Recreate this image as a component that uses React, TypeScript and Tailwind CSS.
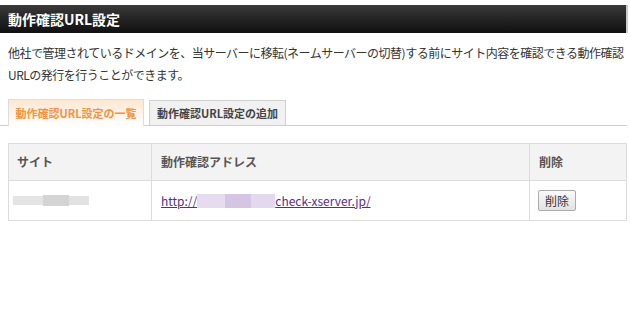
export default function App() {
  return (
    <div className="h-[330px] w-[630px] bg-white pt-[5px] font-['Noto_Sans_CJK_JP',sans-serif] text-[12px] text-[#333]">
      <h1 className="flex h-[28px] w-[628px] items-center border-r-2 border-[#ccc] bg-gradient-to-b from-[#3a3a3a] to-[#101010] pl-[8px] text-[14px] font-bold text-white">
        動作確認URL設定
      </h1>

      <p className="mt-[9px] whitespace-nowrap pl-[8px] leading-[22px] tracking-[-0.5px]">
        他社で管理されているドメインを、当サーバーに移転(ネームサーバーの切替)する前にサイト内容を確認できる動作確認
        <br />
        URLの発行を行うことができます。
      </p>

      <div className="mt-[13px] flex w-[627px] items-end gap-[5px] border-b border-[#cfcfcf] pl-[8px]">
        <div className="-mb-px flex h-[27px] w-[136px] items-center justify-center border border-b-0 border-[#ddd] bg-gradient-to-b from-[#fde7d2] to-white text-[11px] font-bold text-[#f3933f]">
          動作確認URL設定の一覧
        </div>
        <div className="flex h-[25px] w-[137px] items-center justify-center border border-b-0 border-[#d0d0d0] bg-[#f1f1f1] text-[11px] font-bold text-[#444]">
          動作確認URL設定の追加
        </div>
      </div>

      <table className="mt-[17px] ml-[8px] w-[619px] border-collapse">
        <thead>
          <tr className="h-[37px] bg-[#f3f3f3] text-left text-[#555]">
            <th className="w-[143px] border border-[#dcdcdc] pl-[8px] font-bold">サイト</th>
            <th className="w-[378px] border border-[#dcdcdc] pl-[9px] font-bold">動作確認アドレス</th>
            <th className="border border-[#dcdcdc] pl-[9px] font-bold">削除</th>
          </tr>
        </thead>
        <tbody>
          <tr className="h-[40px]">
            <td className="border border-[#dcdcdc] pl-[4px]">
              <div className="flex items-center">
                <span className="h-[9px] w-[30px] bg-[#e4e4e4]" />
                <span className="h-[11px] w-[26px] bg-[#d4d4d4]" />
                <span className="h-[9px] w-[20px] bg-[#e2e2e2]" />
              </div>
            </td>
            <td className="border border-[#dcdcdc] pl-[9px]">
              <div className="flex items-center">
                <span className="text-[#5a2d82] underline">http://</span>
                <span className="h-[14px] w-[28px] bg-[#e7dcef]" />
                <span className="h-[14px] w-[26px] bg-[#d6c4e4]" />
                <span className="h-[14px] w-[24px] bg-[#e4d8ee]" />
                <span className="text-[#5a2d82] underline">check-xserver.jp/</span>
              </div>
            </td>
            <td className="border border-[#dcdcdc] pl-[8px]">
              <button className="h-[21px] w-[38px] rounded-[2px] border border-[#aaa] bg-gradient-to-b from-[#fafafa] to-[#e2e2e2] text-[12px] text-[#333]">
                削除
              </button>
            </td>
          </tr>
        </tbody>
      </table>
    </div>
  );
}
